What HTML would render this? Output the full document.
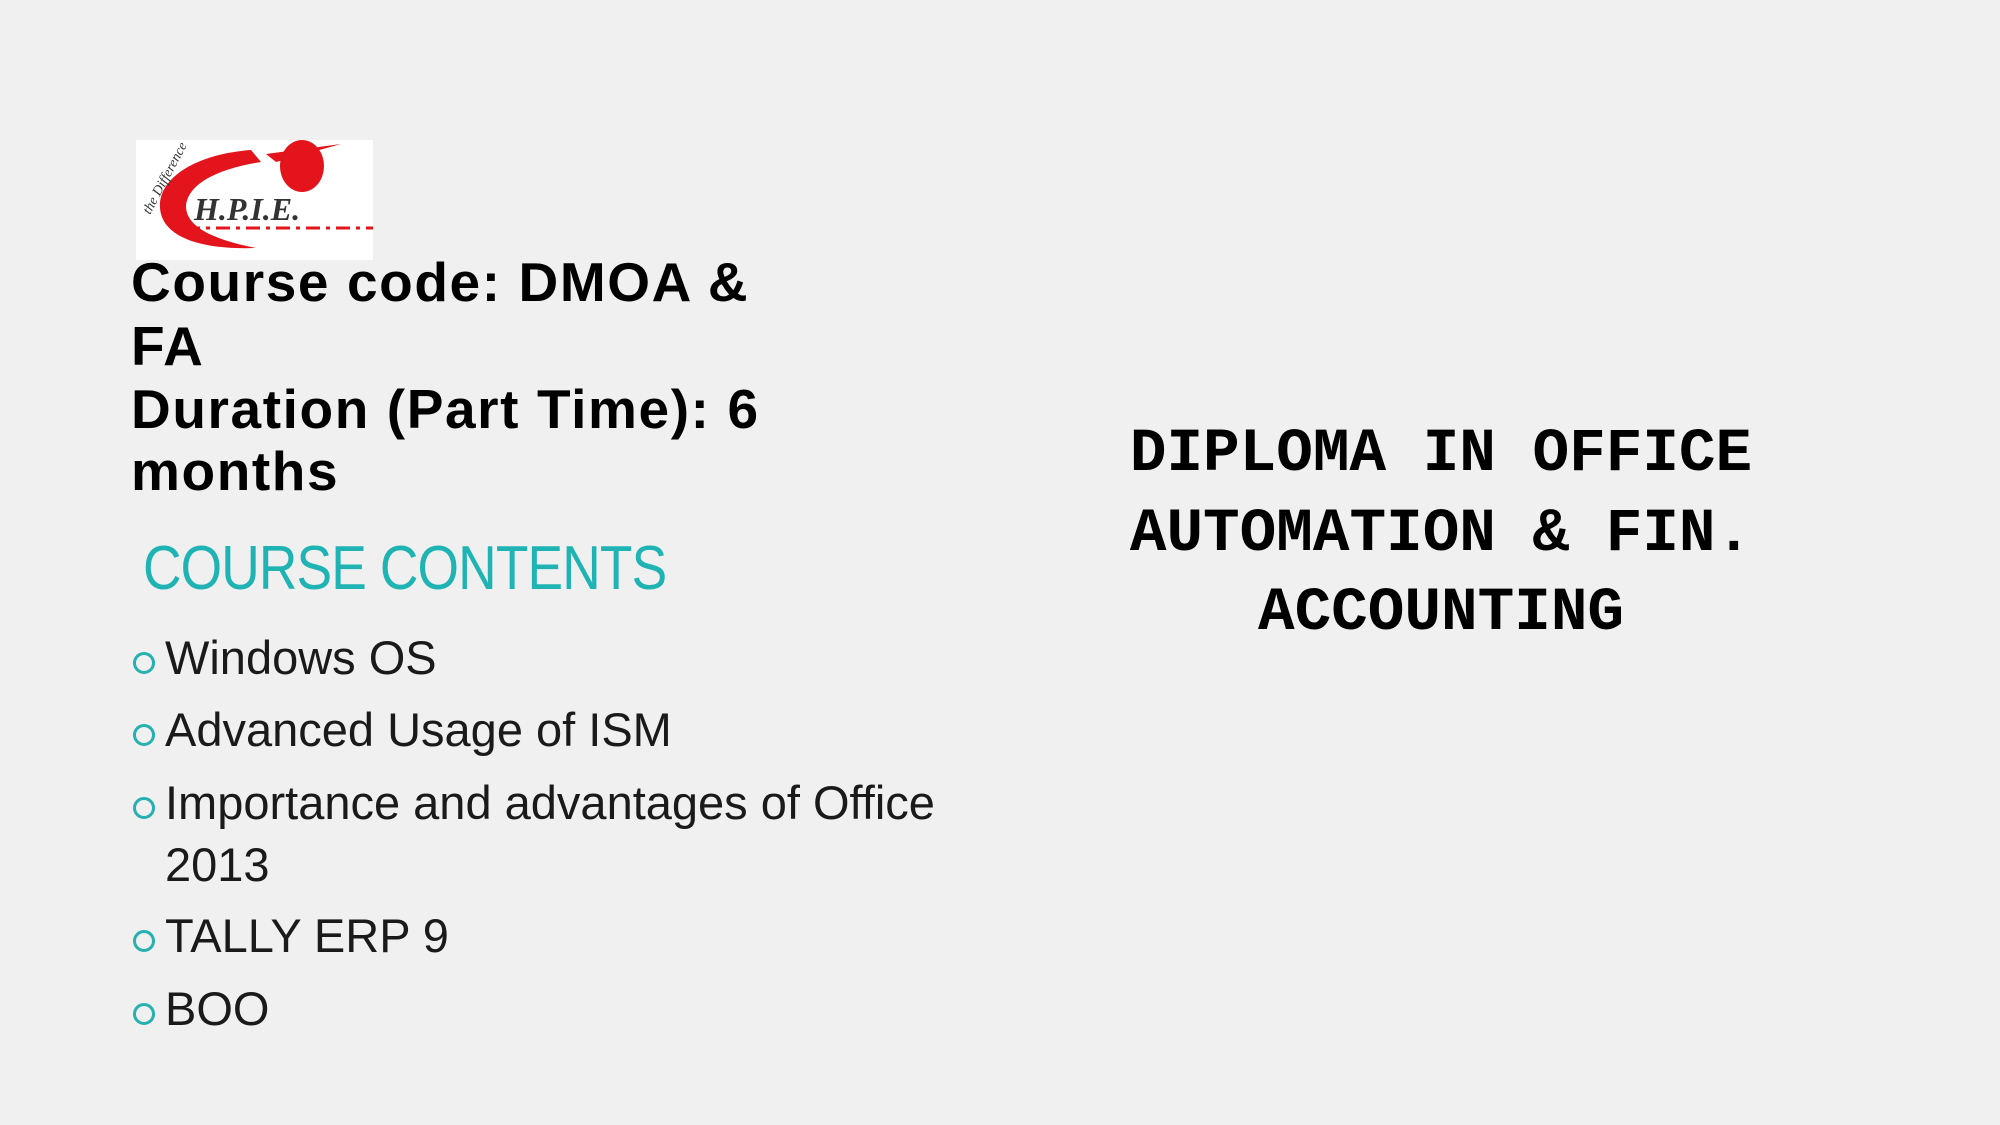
<!DOCTYPE html>
<html><head><meta charset="utf-8"><style>
html,body{margin:0;padding:0}
body{width:2000px;height:1125px;background:#f0f0f0;position:relative;overflow:hidden;font-family:"Liberation Sans",sans-serif}
.a{position:absolute;white-space:nowrap;line-height:1}
.h{font-weight:bold;font-size:55px;color:#000;left:131px;letter-spacing:1.6px}
.b{font-size:47px;color:#1a1a1a;left:165px}
.dot{position:absolute;left:133px;width:16px;height:16px;border:3px solid #26b0b0;border-radius:50%}
.t{font-family:"Liberation Mono",monospace;font-weight:bold;font-size:61px;color:#000;left:1041px;width:800px;text-align:center}
</style></head><body>
<svg class="a" style="left:136px;top:140px" width="237" height="120" viewBox="0 0 237 120">
<rect width="237" height="120" fill="#fff"/>
<path d="M115 10 C60 14 22 38 24 68 C26 96 62 110 120 108 C80 100 50 88 50 66 C52 42 86 28 125 22 Z" fill="#e3141b"/>
<path d="M130 14 L205 4 L140 22 Z" fill="#e3141b"/>
<ellipse cx="166" cy="26" rx="22" ry="26" fill="#e3141b"/>
<text x="58" y="80" font-family="Liberation Serif,serif" font-style="italic" font-weight="bold" font-size="32" fill="#333">H.P.I.E.</text>
<path d="M50 88 H237" stroke="#e3141b" stroke-width="3" stroke-dasharray="14 6 4 6"/>
<text x="0" y="0" font-family="Liberation Serif,serif" font-style="italic" font-size="14" fill="#333" transform="translate(14 75) rotate(-62)">the Difference</text>
</svg>
<div class="a h" style="top:255px">Course code: DMOA &amp;</div>
<div class="a h" style="top:319px">FA</div>
<div class="a h" style="top:382px">Duration (Part Time): 6</div>
<div class="a h" style="top:444px">months</div>
<div class="a" style="left:143px;top:538px;font-size:62px;color:#1fb3b3;letter-spacing:-1px;transform:scaleX(0.86);transform-origin:left">COURSE CONTENTS</div>
<div class="dot" style="top:652px"></div><div class="a b" style="top:634px">Windows OS</div>
<div class="dot" style="top:724px"></div><div class="a b" style="top:706px">Advanced Usage of ISM</div>
<div class="dot" style="top:797px"></div><div class="a b" style="top:779px">Importance and advantages of Office</div>
<div class="a b" style="top:841px">2013</div>
<div class="dot" style="top:930px"></div><div class="a b" style="top:912px">TALLY ERP 9</div>
<div class="dot" style="top:1003px"></div><div class="a b" style="top:985px">BOO</div>
<div class="a t" style="top:424px">DIPLOMA IN OFFICE</div>
<div class="a t" style="top:504px">AUTOMATION &amp; FIN.</div>
<div class="a t" style="top:583px">ACCOUNTING</div>
</body></html>
